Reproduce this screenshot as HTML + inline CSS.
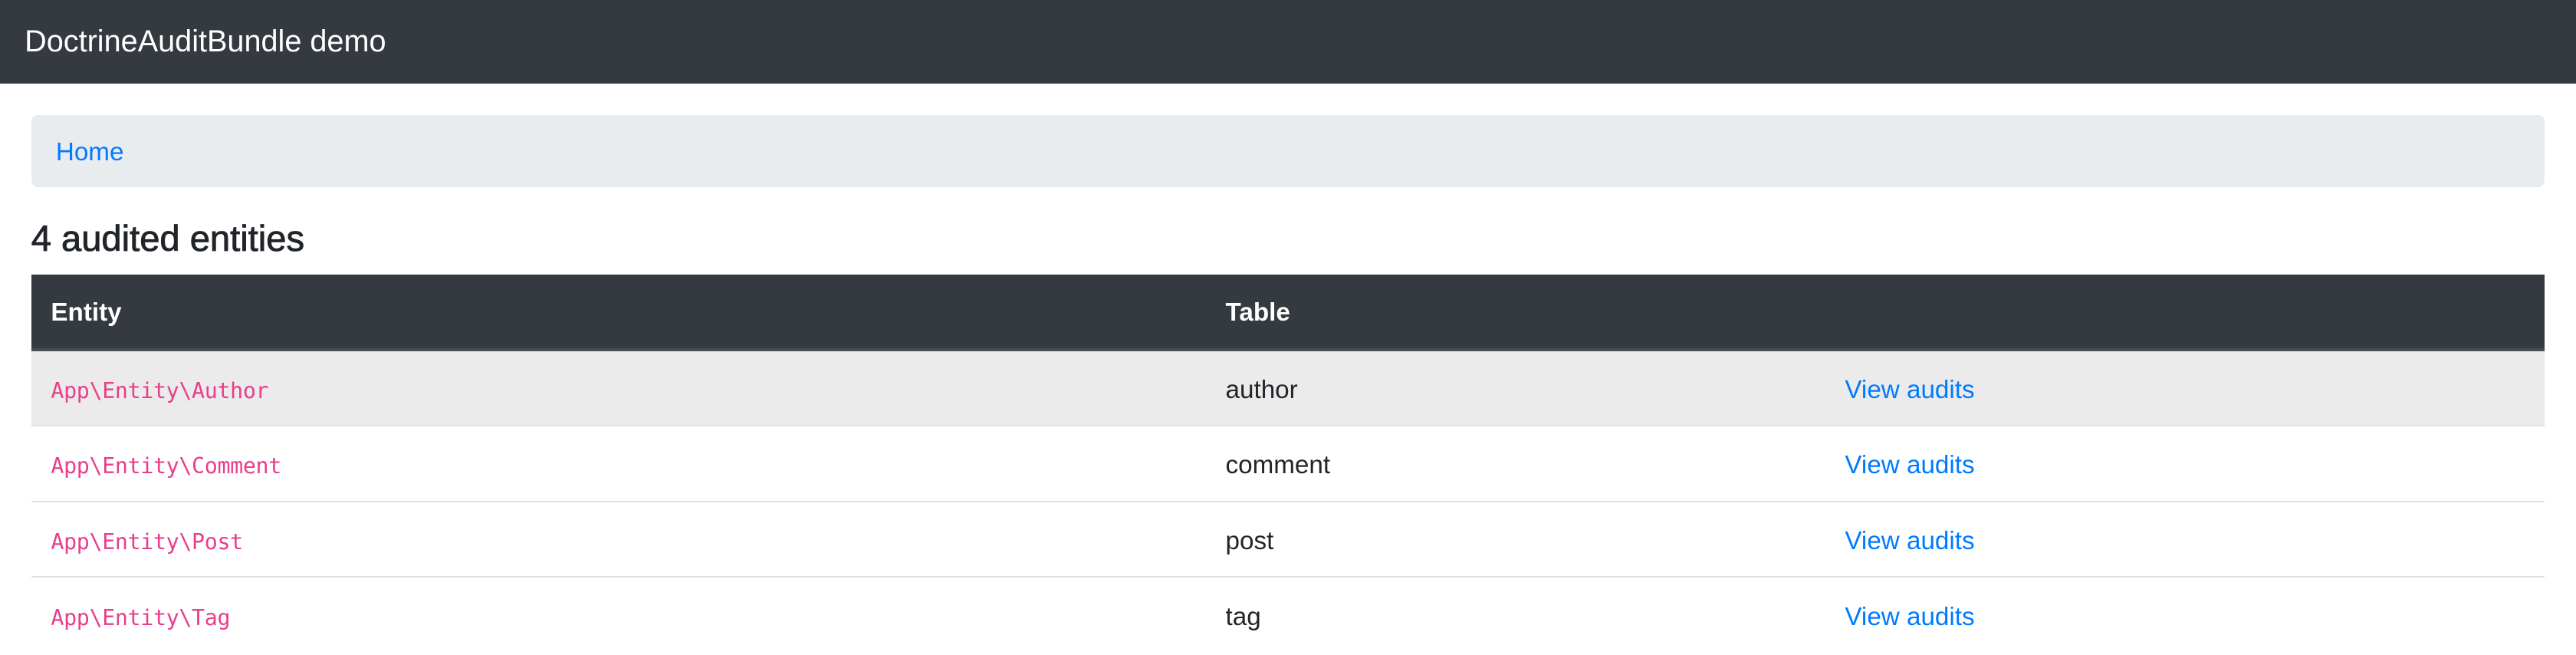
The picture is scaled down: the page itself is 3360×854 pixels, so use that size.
<!DOCTYPE html>
<html><head><meta charset="utf-8">
<style>
html,body{margin:0;padding:0;background:#fff;}
body{zoom:2.142857;width:1568px;height:398.5px;overflow:hidden;font-family:"Liberation Sans",Arial,sans-serif;color:#212529;font-size:16px;}
.nav{height:51px;background:#343a40;color:#fff;font-size:18.5px;line-height:51px;padding-left:15px;box-sizing:border-box;}
.bc{position:absolute;left:19px;top:70px;width:1530px;height:44px;background:#e9ecef;border-radius:4px;}
.bc a{position:absolute;left:15px;top:1px;line-height:44px;color:#007bff;text-decoration:none;font-size:15.5px;}
h4{position:absolute;left:19px;top:130px;margin:0;font-size:22px;font-weight:normal;line-height:30px;-webkit-text-stroke:0.4px #212529;}
table{position:absolute;left:19px;top:167px;width:1530px;border-collapse:collapse;}
th{background:#343a40;color:#fff;text-align:left;font-weight:bold;height:46px;padding:2px 12px 0;border-bottom:2px solid #454d55;box-sizing:border-box;font-size:15.5px;}
td{height:46px;padding:3px 12px 0;border-top:1px solid #dee2e6;box-sizing:border-box;font-size:15.5px;}
tr.s td{background:#ebebeb;border-top:none;}
code{font-family:"DejaVu Sans Mono","Liberation Mono",monospace;font-size:13.2px;color:#e83e8c;letter-spacing:-0.15px;}
a.v{color:#007bff;text-decoration:none;}
</style></head><body>
<div class="nav">DoctrineAuditBundle demo</div>
<div class="bc"><a>Home</a></div>
<h4>4 audited entities</h4>
<table>
<colgroup><col style="width:715px"><col style="width:377px"><col></colgroup>
<tr><th>Entity</th><th>Table</th><th></th></tr>
<tr class="s"><td><code>App\Entity\Author</code></td><td>author</td><td><a class="v">View audits</a></td></tr>
<tr><td><code>App\Entity\Comment</code></td><td>comment</td><td><a class="v">View audits</a></td></tr>
<tr><td><code>App\Entity\Post</code></td><td>post</td><td><a class="v">View audits</a></td></tr>
<tr><td><code>App\Entity\Tag</code></td><td>tag</td><td><a class="v">View audits</a></td></tr>
</table>
</body></html>
